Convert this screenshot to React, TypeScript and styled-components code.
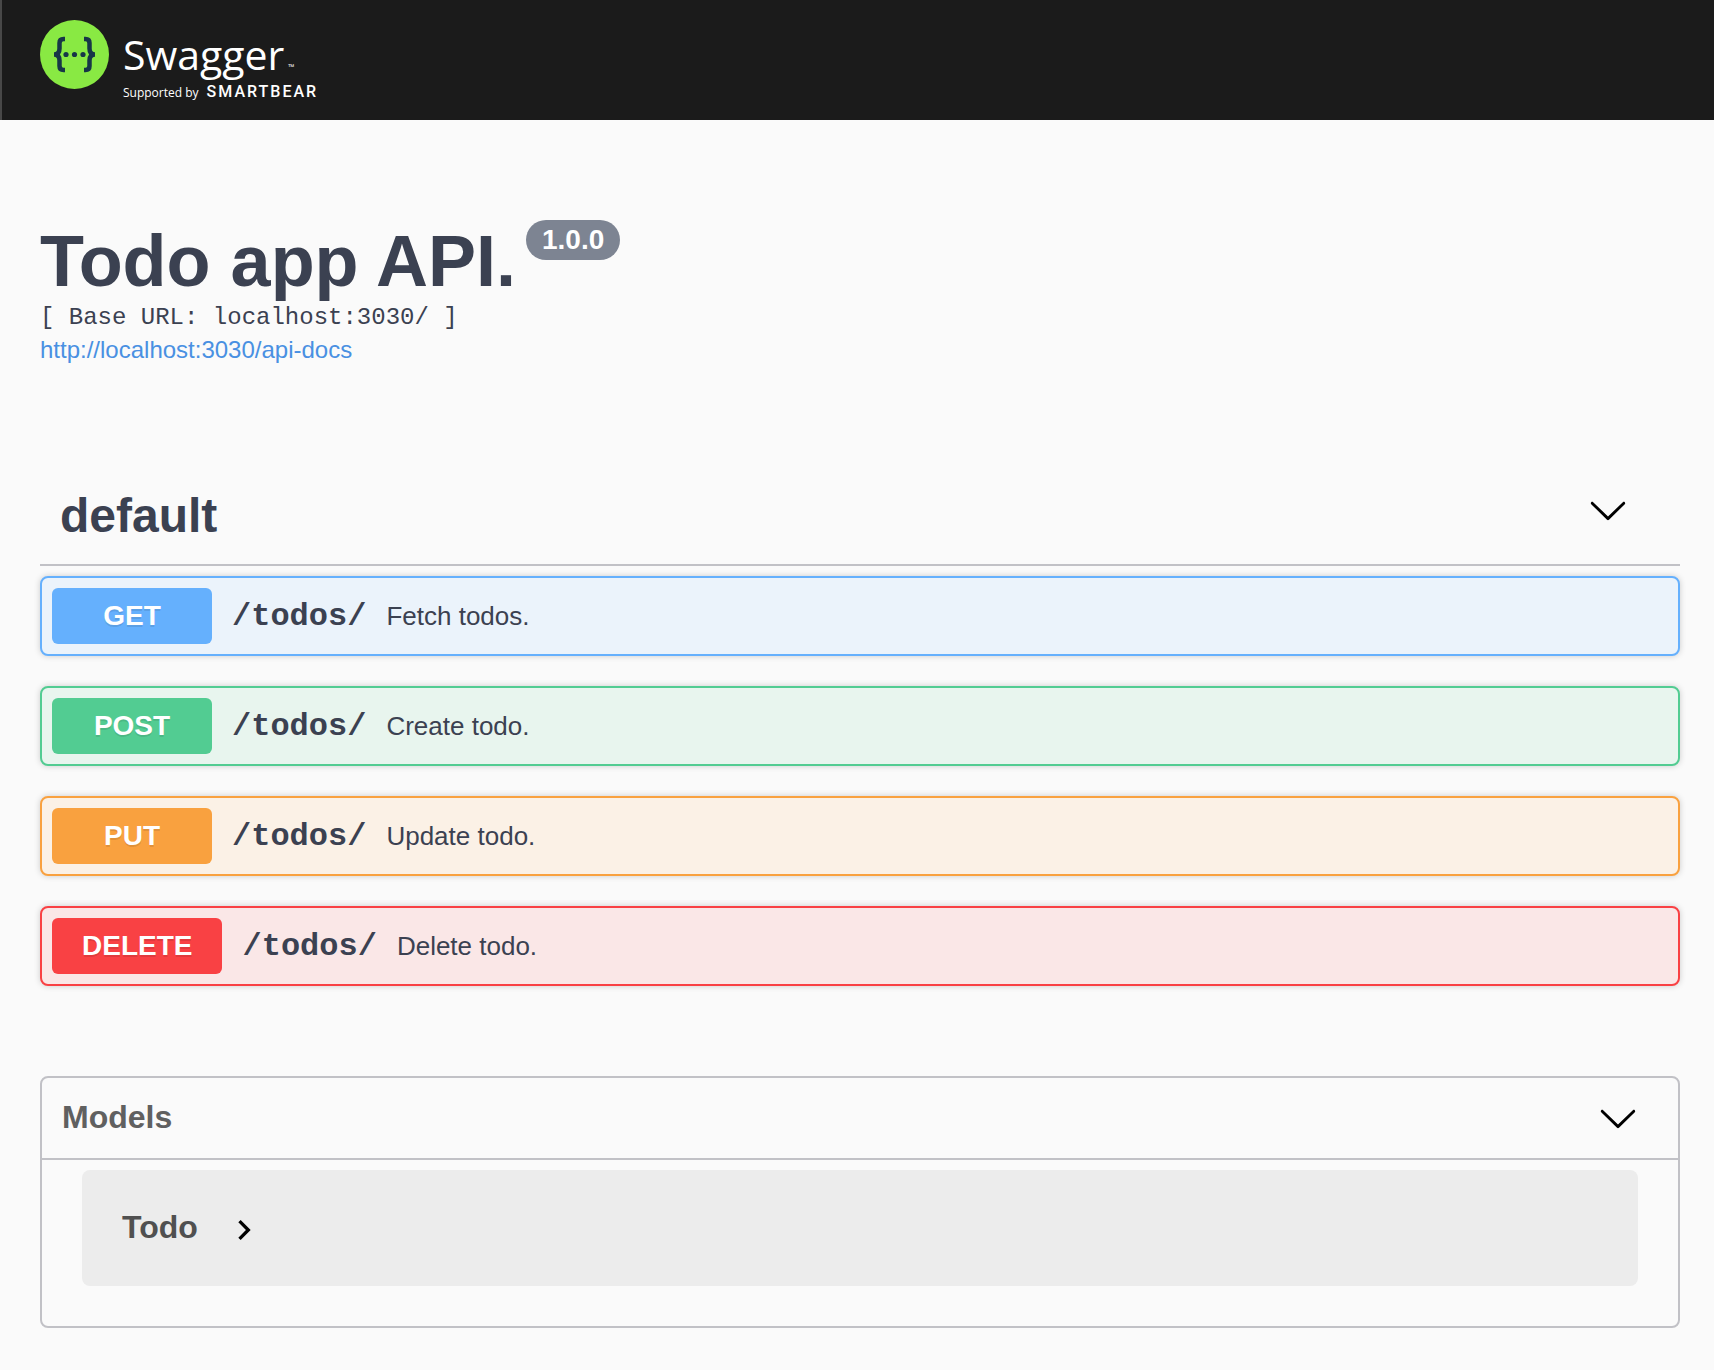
import React, { useState } from "react";
import styled, { createGlobalStyle } from "styled-components";

const sans = `"Liberation Sans", Helvetica, Arial, sans-serif`;
const mono = `"Liberation Mono", "Courier New", monospace`;

const GlobalStyle = createGlobalStyle`
  *, *::before, *::after { box-sizing: border-box; }
  body {
    margin: 0;
    background: #fafafa;
    color: #3b4151;
    font-family: ${sans};
  }
  h1, h2, h3, p, pre { margin: 0; }
`;

const Topbar = styled.header`
  display: flex;
  align-items: flex-start;
  height: 120px;
  padding: 20px 34px 0 38px;
  background: #1b1b1b;
  border-left: 2px solid #484848;
`;

const LogoLink = styled.a`
  display: flex;
  gap: 14px;
  color: #fff;
  text-decoration: none;
`;

const LogoMark = styled.svg`
  width: 69px;
  height: 69px;
`;

const LogoText = styled.span`
  display: flex;
  flex-direction: column;
  padding-top: 2px;
  font-family: "Open Sans", sans-serif;
`;

const Wordmark = styled.span`
  display: flex;
  align-items: baseline;
  gap: 4px;
  font-size: 41px;
  font-weight: 400;
  line-height: 64px;
  height: 62px;
`;

const Trademark = styled.span`
  font-size: 8px;
`;

const Tagline = styled.span`
  display: flex;
  align-items: baseline;
  gap: 8px;
  font-size: 12px;
  line-height: 16px;
`;

const Sponsor = styled.span`
  font-family: Roboto, sans-serif;
  font-size: 16px;
  font-weight: 500;
  letter-spacing: 2px;
`;

const Wrapper = styled.main`
  padding: 100px 34px 42px 40px;
`;

const Info = styled.section`
  display: flex;
  flex-direction: column;
  align-items: flex-start;
`;

const TitleRow = styled.div`
  display: flex;
  align-items: flex-start;
  gap: 10px;
`;

const Title = styled.h1`
  font-size: 72px;
  line-height: 82px;
`;

const Version = styled.span`
  padding: 4px 16px;
  border-radius: 20px;
  background: #7d8492;
  color: #fff;
  font-size: 28px;
  font-weight: 700;
  line-height: 32px;
`;

const BaseUrl = styled.pre`
  font-family: ${mono};
  font-size: 24px;
  line-height: 32px;
`;

const DocsLink = styled.a`
  color: #4990e2;
  font-size: 24px;
  line-height: 32px;
  text-decoration: none;
`;

const TagSection = styled.section`
  margin-top: 100px;
`;

const TagHeader = styled.h2`
  margin-bottom: 10px;
  border-bottom: 2px solid #c1c1c6;
`;

const Toggle = styled.button`
  display: flex;
  align-items: flex-start;
  justify-content: space-between;
  width: 100%;
  border: 0;
  background: none;
  font-family: ${sans};
  font-weight: 700;
  cursor: pointer;
`;

const TagToggle = styled(Toggle)`
  padding: 24px 52px 22px 20px;
  color: #3b4151;
  font-size: 48px;
  line-height: 52px;
`;

const ModelsToggle = styled(Toggle)`
  padding: 20px 40px 20px 20px;
  color: #606060;
  font-size: 32px;
  line-height: 38px;
`;

const Icon = styled.svg`
  flex: none;
  width: 40px;
  height: 40px;
  fill: #000;
`;

const Operations = styled.div`
  display: flex;
  flex-direction: column;
  gap: 30px;
`;

const Operation = styled.button<{ $accent: string; $tint: string }>`
  display: flex;
  align-items: center;
  gap: 20px;
  width: 100%;
  height: 80px;
  padding: 10px;
  border: 2px solid ${(p) => p.$accent};
  border-radius: 8px;
  background: ${(p) => p.$tint};
  box-shadow: 0 0 6px rgba(0, 0, 0, 0.19);
  color: #3b4151;
  font-family: ${sans};
  text-align: left;
  cursor: pointer;
`;

const Method = styled.span<{ $accent: string }>`
  min-width: 160px;
  padding: 12px 30px;
  border-radius: 6px;
  background: ${(p) => p.$accent};
  color: #fff;
  font-size: 28px;
  font-weight: 700;
  line-height: 32px;
  text-align: center;
  text-shadow: 0 2px 0 rgba(0, 0, 0, 0.1);
`;

const Path = styled.span`
  font-family: ${mono};
  font-size: 32px;
  font-weight: 700;
`;

const Summary = styled.span`
  font-size: 26px;
`;

const Models = styled.section`
  margin-top: 90px;
  border: 2px solid #c1c1c6;
  border-radius: 8px;
`;

const ModelsHeader = styled.h2`
  border-bottom: 2px solid #c1c1c6;
`;

const ModelList = styled.div`
  padding: 10px 40px 40px;
`;

const Model = styled.button`
  display: flex;
  align-items: flex-start;
  gap: 26px;
  width: 100%;
  padding: 40px 40px 36px;
  border: 0;
  border-radius: 8px;
  background: #ececec;
  color: #505050;
  font-family: ${sans};
  font-size: 32px;
  font-weight: 700;
  line-height: 34px;
  cursor: pointer;
`;

const operations = [
  { method: "GET", path: "/todos/", summary: "Fetch todos.", accent: "#65b0fd", tint: "#ebf3fb" },
  { method: "POST", path: "/todos/", summary: "Create todo.", accent: "#52cc92", tint: "#e8f5ee" },
  { method: "PUT", path: "/todos/", summary: "Update todo.", accent: "#f9a13f", tint: "#fbf1e6" },
  { method: "DELETE", path: "/todos/", summary: "Delete todo.", accent: "#f94144", tint: "#fae7e7" },
];

const ChevronDown = () => (
  <Icon viewBox="0 0 20 20" aria-hidden="true">
    <path d="M17.418 6.109c.272-.268.709-.268.979 0s.271.701 0 .969l-7.908 7.83c-.27.268-.707.268-.979 0l-7.908-7.83c-.27-.268-.27-.701 0-.969.271-.268.709-.268.979 0L10 13.25l7.418-7.141z" />
  </Icon>
);

const ChevronRight = () => (
  <Icon viewBox="0 0 24 24" aria-hidden="true">
    <path d="M10 6L8.59 7.41 13.17 12l-4.58 4.59L10 18l6-6z" />
  </Icon>
);

const Logo = () => (
  <LogoMark viewBox="0 0 69 69" aria-hidden="true">
    <circle cx="34.5" cy="34.5" r="34.5" fill="#89e943" />
    <g fill="none" stroke="#173647" strokeWidth="4.5">
      <path d="M25 19h-1.5q-4 0-4 4v5.5q0 6-5.500 6q5.500 0 5.500 6v5.500q0 4 4 4H25" />
      <path d="M44 19h1.5q4 0 4 4v5.5q0 6 5.500 6q-5.500 0-5.500 6v5.500q0 4-4 4H44" />
    </g>
    <g fill="#173647">
      <circle cx="26" cy="34.5" r="2.6" />
      <circle cx="34.5" cy="34.5" r="2.6" />
      <circle cx="43" cy="34.5" r="2.6" />
    </g>
  </LogoMark>
);

export default function App() {
  const [tagOpen, setTagOpen] = useState(true);
  const [modelsOpen, setModelsOpen] = useState(true);

  return (
    <>
      <GlobalStyle />
      <Topbar>
        <LogoLink href="#">
          <Logo />
          <LogoText>
            <Wordmark>
              Swagger<Trademark>™</Trademark>
            </Wordmark>
            <Tagline>
              Supported by <Sponsor>SMARTBEAR</Sponsor>
            </Tagline>
          </LogoText>
        </LogoLink>
      </Topbar>
      <Wrapper>
        <Info>
          <TitleRow>
            <Title>Todo app API.</Title>
            <Version>1.0.0</Version>
          </TitleRow>
          <BaseUrl>[ Base URL: localhost:3030/ ]</BaseUrl>
          <DocsLink href="#api-docs">http://localhost:3030/api-docs</DocsLink>
        </Info>
        <TagSection>
          <TagHeader>
            <TagToggle aria-expanded={tagOpen} onClick={() => setTagOpen(!tagOpen)}>
              default
              <ChevronDown />
            </TagToggle>
          </TagHeader>
          {tagOpen && (
            <Operations>
              {operations.map((op) => (
                <Operation key={op.method} $accent={op.accent} $tint={op.tint}>
                  <Method $accent={op.accent}>{op.method}</Method>
                  <Path>{op.path}</Path>
                  <Summary>{op.summary}</Summary>
                </Operation>
              ))}
            </Operations>
          )}
        </TagSection>
        <Models>
          <ModelsHeader>
            <ModelsToggle aria-expanded={modelsOpen} onClick={() => setModelsOpen(!modelsOpen)}>
              Models
              <ChevronDown />
            </ModelsToggle>
          </ModelsHeader>
          {modelsOpen && (
            <ModelList>
              <Model>
                Todo
                <ChevronRight />
              </Model>
            </ModelList>
          )}
        </Models>
      </Wrapper>
    </>
  );
}
